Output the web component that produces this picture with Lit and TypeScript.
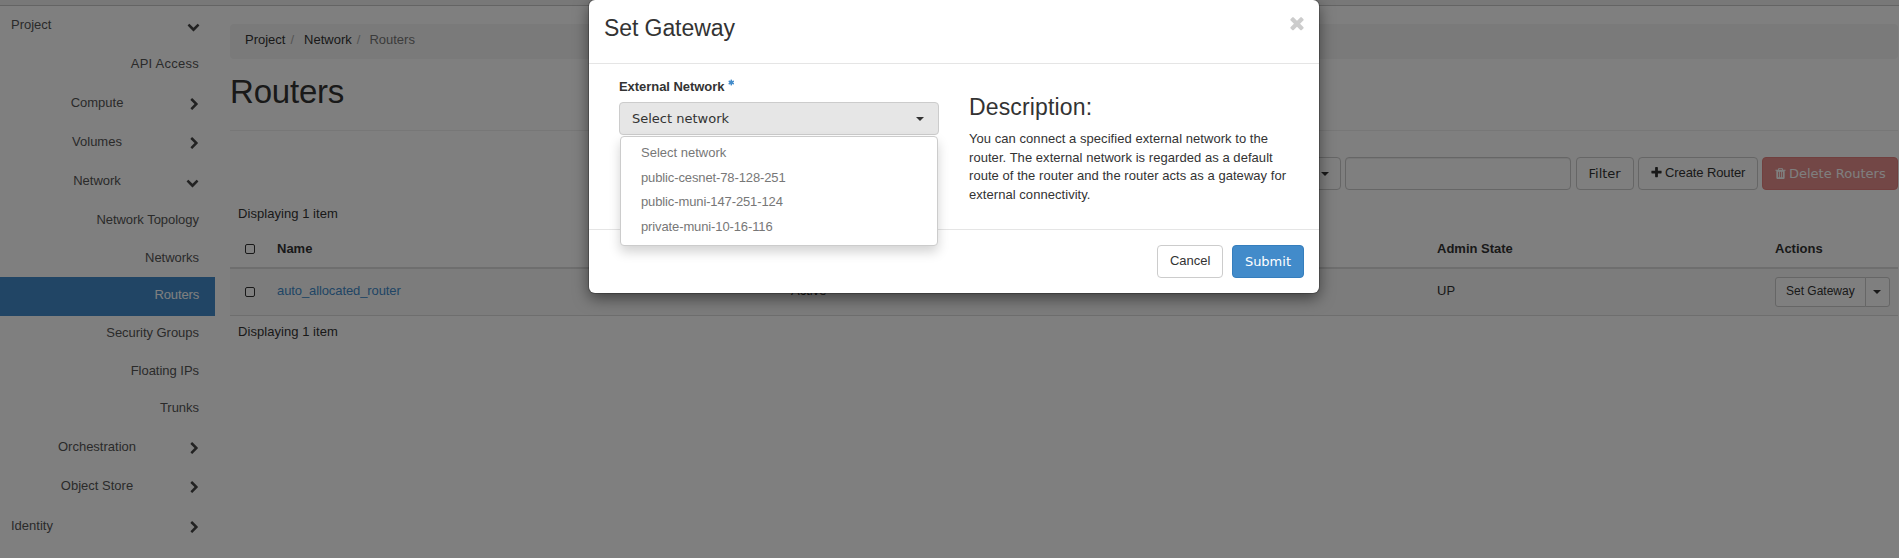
import { LitElement, html, css, svg } from "lit";
import { customElement, property } from "lit/decorators.js";

const PATHS: Record<string, string> = {
  down: "M1683 808l-742 741q-19 19-45 19t-45-19L109 808q-19-19-19-45.500t19-45.500l166-165q19-19 45-19t45 19l531 531 531-531q19-19 45-19t45 19l166 165q19 19 19 45.500t-19 45.500z",
  right: "M1363 877l-742 742q-19 19-45 19t-45-19l-166-166q-19-19-19-45t19-45l531-531-531-531q-19-19-19-45t19-45L531 45q19-19 45-19t45 19l742 742q19 19 19 45t-19 45z",
  times: "M1490 1322q0 40-28 68l-136 136q-28 28-68 28t-68-28l-294-294-294 294q-28 28-68 28t-68-28l-136-136q-28-28-28-68t28-68l294-294-294-294q-28-28-28-68t28-68l136-136q28-28 68-28t68 28l294 294 294-294q28-28 68-28t68 28l136 136q28 28 28 68t-28 68l-294 294 294 294q28 28 28 68z",
  plus: "M1600 736v192q0 40-28 68t-68 28h-416v416q0 40-28 68t-68 28H800q-40 0-68-28t-28-68v-416H288q-40 0-68-28t-28-68V736q0-40 28-68t68-28h416V224q0-40 28-68t68-28h192q40 0 68 28t28 68v416h416q40 0 68 28t28 68z",
  trash: "M704 1376V672q0-14-9-23t-23-9h-64q-14 0-23 9t-9 23v704q0 14 9 23t23 9h64q14 0 23-9t9-23zm256 0V672q0-14-9-23t-23-9h-64q-14 0-23 9t-9 23v704q0 14 9 23t23 9h64q14 0 23-9t9-23zm256 0V672q0-14-9-23t-23-9h-64q-14 0-23 9t-9 23v704q0 14 9 23t23 9h64q14 0 23-9t9-23zM672 384h448l-48-117q-7-9-17-11H738q-10 2-17 11zm928 32v64q0 14-9 23t-23 9h-96v948q0 83-47 143.500t-113 60.500H480q-66 0-113-58.500T320 1464V512h-96q-14 0-23-9t-9-23v-64q0-14 9-23t23-9h309l70-167q15-37 54-63t79-26h320q40 0 79 26t54 63l70 167h309q14 0 23 9t9 23z",
  asterisk: "M1482 1050q46 26 59.500 77.500t-12.500 97.500l-64 110q-26 46-77.500 59.500t-97.500-12.500l-266-153v307q0 52-38 90t-90 38H768q-52 0-90-38t-38-90v-307l-266 153q-46 26-97.500 12.500T199 1335l-64-110q-26-46-12.500-97.500T182 1050l266-154-266-154q-46-26-59.500-77.500T135 567l64-110q26-46 77.500-59.500T374 410l266 153V256q0-52 38-90t90-38h128q52 0 90 38t38 90v307l266-153q46-26 97.500-12.500T1465 457l64 110q26 46 12.500 97.500T1482 742l-266 154z",
};

const icon = (name: string) =>
  html`<svg class="icon ${name}" viewBox="0 0 1792 1792" aria-hidden="true">${svg`<path d=${PATHS[name]} />`}</svg>`;

const shared = css`
  * { box-sizing: border-box; }
  .icon { width: 13px; height: 13px; fill: currentColor; flex: none; display: block; }
  .caret { width: 0; height: 0; border: 4px solid transparent; border-top-color: currentColor; border-bottom: 0; flex: none; }
  .btn {
    display: flex; align-items: center; height: 33px; padding: 0 12px; white-space: nowrap;
    border: 1px solid #ccc; border-radius: 4px; background: #fff; color: #333;
    font: 13px/18px "Liberation Sans", Arial, sans-serif;
  }
  .native { font-family: "DejaVu Sans", sans-serif; }
  .lift { padding-bottom: 2px; }
`;

@customElement("side-nav")
class SideNav extends LitElement {
  static styles = [shared, css`
    :host { display: block; width: 215px; padding-top: 1px; color: #555; }
    .row { display: flex; align-items: center; height: 39px; padding-right: 16px; }
    .top { padding-left: 11px; justify-content: space-between; }
    .group .name { width: 194px; text-align: center; }
    .group .icon { margin-left: -8px; }
    .leaf { justify-content: flex-end; letter-spacing: .25px; }
    .sub { height: 38.570px; margin-bottom: -1px; letter-spacing: -.03px; }
    .sub.last { margin-bottom: 1px; }
    .active { background: #428bca; color: #fff; letter-spacing: -.15px; }
    .name { margin-top: -4px; }
    .sub .name { margin-top: -2px; }
    .identity { margin-top: 1px; }
    .icon { color: #444; }
    .top .icon.down { margin-right: -.500px; }
    .icon.right { margin-right: -2px; }
    .group .icon.right { margin-left: -6px; }
  `];
  render() {
    const group = (name: string, state: string) =>
      html`<div class="row group"><span class="name">${name}</span>${icon(state)}</div>`;
    const subs = ["Network Topology", "Networks", "Routers", "Security Groups", "Floating IPs", "Trunks"];
    return html`
      <div class="row top"><span class="name">Project</span>${icon("down")}</div>
      <div class="row leaf"><span class="name">API Access</span></div>
      ${group("Compute", "right")}${group("Volumes", "right")}${group("Network", "down")}
      ${subs.map((s, i) => html`<div class="row leaf sub ${s === "Routers" ? "active" : ""} ${i === 5 ? "last" : ""}"><span class="name">${s}</span></div>`)}
      ${group("Orchestration", "right")}${group("Object Store", "right")}
      <div class="row top identity"><span class="name">Identity</span>${icon("right")}</div>
    `;
  }
}

@customElement("router-panel")
class RouterPanel extends LitElement {
  static styles = [shared, css`
    :host { display: block; flex: 1; min-width: 0; padding: 18px 1px 0 15px; color: #333; }
    .crumbs { display: flex; height: 35px; padding: 7px 15px 0; background: #f5f5f5; border-radius: 4px; line-height: 18px; }
    .sep { color: #aaa; padding: 0 10px 0 5px; }
    .here { color: #777; letter-spacing: 0; margin-left: -1px; }
    h1 { margin: 14px 0 0; height: 58px; border-bottom: 1px solid #eee; font-size: 33px; font-weight: 400; line-height: 38px; letter-spacing: -.2px; }
    .tools { display: flex; justify-content: flex-end; gap: 4.500px; margin-top: 26px; height: 33px; }
    .field { width: 226px; border: 1px solid #ccc; border-radius: 4px; box-shadow: inset 0 1px 1px rgba(0, 0, 0, .075); }
    .pick { width: 150px; justify-content: flex-end; padding-right: 11px; }
    .tools .icon { margin: 0 2px 0 -1px; }
    .create { width: 119.500px; padding: 0 11px 2px 12px; letter-spacing: -.1px; }
    .danger { width: 136px; padding-right: 10px; background: #d9534f; border-color: #d43f3a; color: #fff; opacity: .65; }
    .filter { width: 58px; }
    .count { height: 18px; padding-left: 8px; line-height: 18px; letter-spacing: .05px; }
    .above { margin-top: 15px; }
    .grid { display: grid; grid-template-columns: 39px 514px 646px 338px 1fr; padding-left: 8px; align-items: center; }
    .head { height: 46px; padding-top: 7px; font-weight: 700; border-bottom: 2px solid #ddd; }
    .line { height: 47px; background: #f9f9f9; border-bottom: 1px solid #ddd; }
    .cell { padding-bottom: 2px; }
    .box { width: 10px; height: 10px; margin-left: 7px; border: 1px solid #333; border-radius: 2px; background: #fff; }
    .link { color: #428bca; letter-spacing: -.1px; }
    .pair { display: flex; }
    .sm { height: 30px; padding: 0 10px 2px; font-size: 12px; }
    .l { border-radius: 3px 0 0 3px; }
    .r { border-radius: 0 3px 3px 0; margin-left: -1px; padding: 0 7.500px; }
    .below { margin-top: 7px; }
  `];
  render() {
    return html`
      <div class="crumbs"><span>Project</span><span class="sep">/</span><span>Network</span><span class="sep">/</span><span class="here">Routers</span></div>
      <h1>Routers</h1>
      <div class="tools">
        <div class="btn pick"><span class="caret"></span></div>
        <div class="field"></div>
        <div class="btn native filter">Filter</div>
        <div class="btn create">${icon("plus")}Create Router</div>
        <div class="btn native danger">${icon("trash")}Delete Routers</div>
      </div>
      <div class="count above">Displaying 1 item</div>
      <div class="grid head"><span class="box"></span><span>Name</span><span>Status</span><span>Admin State</span><span>Actions</span></div>
      <div class="grid line">
        <span class="box"></span><span class="cell link">auto_allocated_router</span><span class="cell">Active</span><span class="cell">UP</span>
        <div class="pair"><div class="btn sm l">Set Gateway</div><div class="btn sm r"><span class="caret"></span></div></div>
      </div>
      <div class="count below">Displaying 1 item</div>
    `;
  }
}

@customElement("gateway-dialog")
class GatewayDialog extends LitElement {
  @property({ type: Array }) networks = ["Select network", "public-cesnet-78-128-251", "public-muni-147-251-124", "private-muni-10-16-116"];
  static styles = [shared, css`
    :host { display: block; width: 730px; height: 293px; background: #fff; border-radius: 6px; color: #333; box-shadow: 0 0 0 1px rgba(0, 0, 0, .2), 0 5px 15px rgba(0, 0, 0, .5); }
    .head { display: flex; justify-content: space-between; height: 64px; padding: 15px 15px 0; border-bottom: 1px solid #e5e5e5; }
    .head .icon { width: 20px; height: 20px; margin: -2px -3px 0 0; color: #ccc; }
    h3 { margin: 0; font-size: 23px; font-weight: 400; line-height: 27px; letter-spacing: -.08px; }
    .body { display: flex; height: 165px; padding: 0 15px; }
    .col { flex: 1; padding: 0 15px; }
    .label { display: flex; height: 18px; margin: 14px 0 6px; font-weight: 700; line-height: 18px; letter-spacing: -.05px; }
    .label .icon { width: 7px; height: 7px; margin: 1px 0 0 4px; color: #428bca; }
    .anchor { position: relative; }
    .select { justify-content: space-between; background: #e6e6e6; padding-right: 14px; }
    .menu { position: absolute; top: 34px; left: 1px; width: 318px; padding: 5px 0; background: #fff; border: 1px solid #ccc; border-radius: 4px; box-shadow: 0 6px 12px rgba(0, 0, 0, .175); color: #777; }
    .item { height: 24.570px; padding: 2px 20px; line-height: 18.570px; letter-spacing: -.12px; }
    .item:first-child { letter-spacing: 0; }
    .about h3 { margin: 30px 0 9px; letter-spacing: .15px; }
    p { margin: 0; line-height: 18.700px; white-space: nowrap; letter-spacing: .05px; }
    .foot { display: flex; justify-content: flex-end; gap: 9px; border-top: 1px solid #e5e5e5; padding: 15px 15px 0; }
    .cancel { padding: 0 11.500px 2px; }
    .primary { background: #428bca; border-color: #357ebd; color: #fff; }
  `];
  render() {
    return html`
      <div class="head"><h3>Set Gateway</h3>${icon("times")}</div>
      <div class="body">
        <div class="col">
          <div class="label">External Network${icon("asterisk")}</div>
          <div class="anchor">
            <div class="btn native select">Select network<span class="caret"></span></div>
            <div class="menu">${this.networks.map((n) => html`<div class="item">${n}</div>`)}</div>
          </div>
        </div>
        <div class="col about">
          <h3>Description:</h3>
          <p>You can connect a specified external network to the<br>router. The external network is regarded as a default<br>route of the router and the router acts as a gateway for<br>external connectivity.</p>
        </div>
      </div>
      <div class="foot"><div class="btn cancel">Cancel</div><div class="btn native primary">Submit</div></div>
    `;
  }
}

@customElement("app-root")
class AppRoot extends LitElement {
  static styles = css`
    :host { display: block; position: relative; height: 558px; overflow: hidden; background: #fff; font: 13px/18px "Liberation Sans", Arial, sans-serif; }
    .bar { height: 5px; background: #f0f0f0; border-bottom: 1px solid #c8c8c8; }
    .main { display: flex; }
    .shade { position: absolute; inset: 0; background: rgba(0, 0, 0, .5); display: flex; justify-content: center; align-items: flex-start; padding-left: 9px; }
  `;
  render() {
    return html`
      <div class="bar"></div>
      <div class="main"><side-nav></side-nav><router-panel></router-panel></div>
      <div class="shade"><gateway-dialog></gateway-dialog></div>
    `;
  }
}
